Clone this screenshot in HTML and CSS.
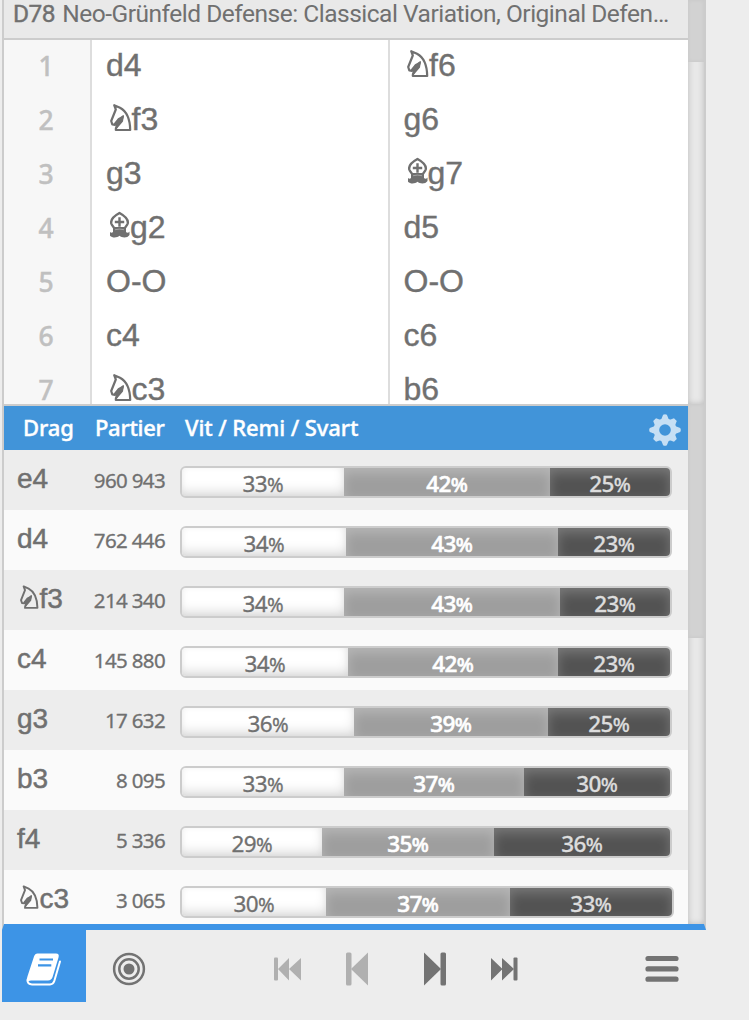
FILE: index.html
```html
<!DOCTYPE html>
<html lang="sv">
<head>
<meta charset="utf-8">
<title>Analys</title>
<link rel="stylesheet" href="styles.css">
</head>
<body>
<svg class="defs" width="0" height="0">
  <symbol id="knight" viewBox="0 0 22 28">
    <path d="M4.200 1.200 10 3.800C16 7 20 14.500 20.200 26H5.800C5.500 22.500 7.500 20.500 11 17.400L12.800 12.600C11 16 8 17.200 5 20.800L2.300 20.400 1.200 17 5.800 5.500Z" fill="none" stroke="currentColor" stroke-width="2.200" stroke-linejoin="round"/>
    <path d="M14 11 13 17.600 7 24.500C6.400 21.500 8 20.500 10.200 17.500L5.500 21 3.800 19.500 8 14.300Z" fill="currentColor"/>
  </symbol>
  <symbol id="bishop" viewBox="0 0 20 28">
    <path d="M9.500 2C15 5 18.500 9 17.700 12.500 17 15 15 15.500 14.500 18H4.500C4 15.500 2 15 1.300 12.500 .5 9 4 5 9.500 2Z" fill="none" stroke="currentColor" stroke-width="2.400"/>
    <path d="M9.500 6.200V15.800M4.800 11H14.200" stroke="currentColor" stroke-width="2.400"/>
    <path d="M3 16H16L16 21C17 22.200 18.500 22 19.500 20.500V24C17.500 27.300 12 27 9.500 24.800 7 27 1.500 27.300 -.5 24V20.500C.5 22 2 22.200 3 21Z" fill="currentColor"/>
    <path d="M5 18.700Q9.500 17.500 14 18.700" fill="none" stroke="#c4c4c4" stroke-width=".6"/>
  </symbol>
</svg>
<main class="panel">
  <section class="pane">
    <div class="pane-body">
      <h1 class="opening"><b>D78</b> Neo-Grünfeld Defense: Classical Variation, Original Defen…</h1>
      <div class="moves">
        <div class="col index"><span>1</span><span>2</span><span>3</span><span>4</span><span>5</span><span>6</span><span>7</span></div>
        <div class="col white"><span>d4</span><span><svg class="n"><use href="#knight"/></svg>f3</span><span>g3</span><span><svg class="b"><use href="#bishop"/></svg>g2</span><span>O-O</span><span>c4</span><span><svg class="n"><use href="#knight"/></svg>c3</span></div>
        <div class="col black"><span><svg class="n"><use href="#knight"/></svg>f6</span><span>g6</span><span><svg class="b"><use href="#bishop"/></svg>g7</span><span>d5</span><span>O-O</span><span>c6</span><span>b6</span></div>
      </div>
    </div>
    <div class="track"><div class="thumb thumb-top"></div></div>
  </section>
  <section class="pane explorer">
    <div class="pane-body">
      <header class="head">
        <span class="h-move">Drag</span><span class="h-games">Partier</span><span class="h-bar">Vit / Remi / Svart</span>
        <svg class="gear" viewBox="0 0 32 32"><g fill="#c6dff4"><circle cx="16" cy="16" r="11.500"/><path d="M12 6 14.100 .8Q16 -.4 17.900 .8L20 6ZM12 26 14.100 31.200Q16 32.400 17.900 31.200L20 26ZM6 12 .8 14.100Q-.4 16 .8 17.900L6 20ZM26 12 31.200 14.100Q32.400 16 31.200 17.900L26 20Z"/><path d="M12 6 14 1.300H18L20 6ZM12 26 14 30.700H18L20 26ZM6 12 1.300 14V18L6 20ZM26 12 30.700 14V18L26 20Z" transform="rotate(45 16 16)"/></g><circle cx="16" cy="16" r="5.800" fill="#4194d9"/></svg>
      </header>
      <div class="row"><span class="san">e4</span><span class="games">960 943</span><div class="bar"><i class="w" style="width:162px">33<small>%</small></i><i class="d" style="width:206px">42<small>%</small></i><i class="l" style="width:120px">25<small>%</small></i></div></div>
      <div class="row"><span class="san">d4</span><span class="games">762 446</span><div class="bar"><i class="w" style="width:164px">34<small>%</small></i><i class="d" style="width:212px">43<small>%</small></i><i class="l" style="width:112px">23<small>%</small></i></div></div>
      <div class="row"><span class="san"><svg class="n"><use href="#knight"/></svg>f3</span><span class="games">214 340</span><div class="bar"><i class="w" style="width:162px">34<small>%</small></i><i class="d" style="width:216px">43<small>%</small></i><i class="l" style="width:110px">23<small>%</small></i></div></div>
      <div class="row"><span class="san">c4</span><span class="games">145 880</span><div class="bar"><i class="w" style="width:166px">34<small>%</small></i><i class="d" style="width:210px">42<small>%</small></i><i class="l" style="width:112px">23<small>%</small></i></div></div>
      <div class="row"><span class="san">g3</span><span class="games">17 632</span><div class="bar"><i class="w" style="width:172px">36<small>%</small></i><i class="d" style="width:194px">39<small>%</small></i><i class="l" style="width:122px">25<small>%</small></i></div></div>
      <div class="row"><span class="san">b3</span><span class="games">8 095</span><div class="bar"><i class="w" style="width:162px">33<small>%</small></i><i class="d" style="width:180px">37<small>%</small></i><i class="l" style="width:146px">30<small>%</small></i></div></div>
      <div class="row"><span class="san">f4</span><span class="games">5 336</span><div class="bar"><i class="w" style="width:140px">29<small>%</small></i><i class="d" style="width:172px">35<small>%</small></i><i class="l" style="width:176px">36<small>%</small></i></div></div>
      <div class="row"><span class="san"><svg class="n"><use href="#knight"/></svg>c3</span><span class="games">3 065</span><div class="bar"><i class="w" style="width:144px">30<small>%</small></i><i class="d" style="width:184px">37<small>%</small></i><i class="l" style="width:162px">33<small>%</small></i></div></div>
    </div>
    <div class="track"><div class="thumb thumb-low"></div></div>
  </section>
</main>
<nav class="controls">
  <span class="tab"><svg width="36" height="34" viewBox="0 0 36 34"><path d="M34 8.500 28.300 28Q27.300 31.400 24 31.400H6Q1.300 31.400 1.500 27" fill="none" stroke="#fff" stroke-width="2" stroke-linecap="round"/><path d="M11.500 .5H30Q33.700 .5 32.500 4.500L26.600 24Q25.500 27.400 22 27.400H5Q2.500 27.400 1 29.500 .2 26 1.600 23L8 3.500Q9 .5 11.500 .5Z" fill="#fff"/><path d="M13.500 6.500H27M12 12.300H25.300" stroke="#3d94e6" stroke-width="2.200"/></svg></span>
  <span class="slot practice"><svg width="34" height="34" viewBox="0 0 34 34"><g fill="none" stroke="#737373" stroke-width="2.500"><circle cx="17" cy="17" r="14.900"/><circle cx="17" cy="17" r="9.700"/></g><circle cx="17" cy="17" r="5.500" fill="#737373"/></svg></span>
  <span class="slot first"><svg width="28" height="24" viewBox="0 0 28 24"><g fill="#b0b0b0"><rect x="0" y="0.500" width="4" height="23" rx="1"/><path d="M15 1V23.500L4 12ZM27 1V23.500L15 12Z"/></g></svg></span>
  <span class="slot prev"><svg width="22" height="34" viewBox="0 0 22 34"><g fill="#b0b0b0"><rect width="5.500" height="33" y=".5" rx="1.500"/><path d="M22 .5V33.500L5 17Z"/></g></svg></span>
  <span class="slot next"><svg width="22" height="34" viewBox="0 0 22 34"><g fill="#737373"><rect x="16.500" width="5.500" height="33" y=".5" rx="1.500"/><path d="M0 .5V33.500L17 17Z"/></g></svg></span>
  <span class="slot last"><svg width="28" height="24" viewBox="0 0 28 24"><g fill="#737373"><rect x="22.500" y="0.500" width="4" height="23" rx="1"/><path d="M0 1V23.500L11.500 12ZM11 1V23.500L23 12Z"/></g></svg></span>
  <span class="slot menu"><svg width="34" height="28" viewBox="0 0 34 28"><path d="M3 3.500H31M3 13.900H31M3 24.200H31" stroke="#737373" stroke-width="5.200" stroke-linecap="round"/></svg></span>
</nav>
</body>
</html>
```
FILE: styles.css
```css
* { box-sizing: border-box; }
body {
  margin: 0;
  height: 1020px;
  overflow: hidden;
  background: #ededed;
  color: #707070;
  font-family: "Noto Sans", sans-serif;
}
.defs { display: block; }
.panel {
  width: 704px;
  height: 930px;
  margin-left: 2px;
  border: solid #ccc;
  border-width: 0 2px 6px;
  border-bottom-color: #3d94e6;
}
.pane { display: flex; height: 404px; }
.explorer { height: 520px; }
.pane-body { width: 684px; overflow: hidden; background: #fff; }
.explorer .pane-body { border-top: 2px solid #ccc; }
.track {
  width: 16px;
  background: #e8e8e8;
  box-shadow: inset 0 0 6px rgba(0, 0, 0, .2);
}
.thumb { background: #d2d2d2; box-shadow: inset 0 0 4px rgba(0, 0, 0, .05); }
.thumb-top { height: 62px; }
.thumb-low { height: 234px; }
.opening {
  margin: 0;
  height: 40px;
  padding-left: 9px;
  border-bottom: 2px solid #ccc;
  background: #e9e9e9;
  font: 400 24.500px/27px Roboto, sans-serif;
  letter-spacing: -.49px;
  white-space: nowrap;
}
.opening b { margin-right: 1.500px; font-weight: 400; -webkit-text-stroke: .4px; }
.moves { display: flex; height: 364px; overflow: hidden; }
.col { flex-shrink: 0; font: 32px/54px "Liberation Sans", Arial, sans-serif; -webkit-text-stroke: .4px; }
.col span { display: block; height: 54px; margin-top: -2px; margin-bottom: 2px; }
.index {
  width: 88px;
  border-right: 2px solid #ddd;
  background: #f7f7f7;
  color: #c0c0c0;
  font: 500 26.500px/57px "Noto Sans", sans-serif;
  text-align: center;
  padding-right: 2px;
}
.white { width: 298px; padding-left: 14px; border-right: 2px solid #ddd; }
.black { width: 298px; padding-left: 13.500px; }
.n { width: 22px; height: 28px; margin: 0 0 -2px 3.500px; }
.b { width: 20px; height: 28px; margin: 0 0 -1px 4px; overflow: visible; }
.head {
  display: flex;
  height: 44px;
  background: #4194d9;
  color: #fff;
  font-weight: 500;
  font-size: 22px;
  line-height: 43px;
  letter-spacing: -.1px;
  white-space: nowrap;
  -webkit-text-stroke: .4px;
}
.h-move { width: 91px; padding-left: 19px; }
.h-games { width: 90px; letter-spacing: -.3px; }
.h-bar { flex: 1; }
.gear { width: 32px; height: 32px; margin: 8px 7px 0 0; }
.row { display: flex; height: 60px; background: #ededed; }
.row:nth-child(odd) { background: #fafafa; }
.san { width: 80px; padding-left: 13px; font: 28px/58px "Liberation Sans", Arial, sans-serif; white-space: nowrap; -webkit-text-stroke: .5px; }
.san .n { width: 19px; height: 25px; margin-left: 3px; margin-right: .5px; }
.games { width: 81px; text-align: right; font-size: 20.500px; line-height: 60px; letter-spacing: -.65px; -webkit-text-stroke: .3px; }
.bar {
  display: flex;
  flex: none;
  height: 32px;
  margin: 16px 0 0 15px;
  border: 2px solid #ccc;
  border-radius: 6px;
  overflow: hidden;
}
.bar i { font-style: normal; font-size: 22.500px; line-height: 32px; text-align: center; letter-spacing: -.6px; white-space: nowrap; -webkit-text-stroke: .3px; }
.bar small { font-size: 20px; letter-spacing: 0; }
.w { background: #fff; box-shadow: inset -2px -7px 12px -3px rgba(0, 0, 0, .15), inset 0 0 6px rgba(0, 0, 0, .04); }
.d { background: #9e9e9e; color: #fff; font-weight: 500; box-shadow: inset 0 5px 12px rgba(255, 255, 255, .25); }
.bar .d { -webkit-text-stroke: .6px; }
.l { background: #535353; color: #ddd; font-weight: 500; box-shadow: inset 0 5px 12px rgba(255, 255, 255, .22); }
.controls { display: flex; height: 72px; margin-left: 2px; align-items: center; }
.controls svg { display: block; }
.tab {
  display: flex;
  align-items: center;
  justify-content: center;
  align-self: flex-start;
  width: 84px;
  height: 72px;
  background: #3d94e6;
}
.tab svg { margin-top: 7px; }
.slot { padding-top: 6px; }
.practice { margin-left: 26px; }
.first { margin-left: 128px; }
.prev { margin-left: 44px; }
.next { margin-left: 56px; }
.last { margin-left: 45px; }
.menu { margin-left: 126px; }
```
